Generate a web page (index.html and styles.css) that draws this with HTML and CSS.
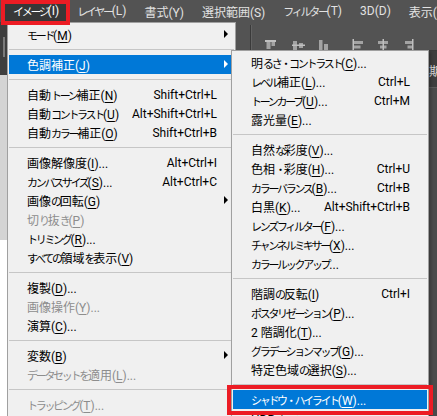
FILE: index.html
```html
<!DOCTYPE html>
<html lang="ja">
<head>
  <meta charset="UTF-8">
  <meta name="viewport" content="width=device-width, initial-scale=1.0">
  <title>イメージ - 色調補正</title>
  <link rel="stylesheet" href="styles.css">
</head>
<body>

  <!-- メニューバー -->
  <nav class="menubar">
    <span class="menubar-item is-open">イメージ(I)</span>
    <span class="menubar-item">レイヤー(L)</span>
    <span class="menubar-item">書式(Y)</span>
    <span class="menubar-item">選択範囲(S)</span>
    <span class="menubar-item">フィルター(T)</span>
    <span class="menubar-item">3D(D)</span>
    <span class="menubar-item">表示(V)</span>
  </nav>

  <div class="main">
    <!-- 左のツールパネル -->
    <div class="toolstrip">
      <div class="toolstrip-top"><span class="grip"></span></div>
      <div class="toolstrip-grey"></div>
      <div class="toolstrip-doc"></div>
    </div>

    <div class="right-area">
      <!-- オプションバー（整列ボタン） -->
      <div class="optionsbar">
        <span class="optionsbar-sep"></span>
        <svg class="align-tools" width="154" height="14" viewBox="0 0 154 14">
          <g fill="#a3a3a3">
            <rect x="3" y="3" width="11" height="2" fill="#c0c0c0"/>
            <rect x="4.5" y="5" width="4" height="7"/>
            <rect x="9.5" y="5" width="3.5" height="4"/>

            <rect x="31" y="4" width="4" height="9"/>
            <rect x="37" y="6" width="4" height="5"/>
            <rect x="30" y="7.5" width="13" height="1.5" fill="#c0c0c0"/>

            <rect x="57" y="3" width="3.5" height="10"/>
            <rect x="62" y="7" width="4" height="6"/>

            <rect x="90.5" y="2" width="1.5" height="11" fill="#c0c0c0"/>
            <rect x="92" y="4" width="9" height="3"/>
            <rect x="92" y="8.5" width="6.5" height="3"/>

            <rect x="116" y="4" width="10" height="3"/>
            <rect x="118" y="8.5" width="6.5" height="3"/>
            <rect x="120.5" y="2" width="1.5" height="11" fill="#c0c0c0"/>

            <rect x="143" y="4" width="7" height="3"/>
            <rect x="145.5" y="8.5" width="4.5" height="3"/>
            <rect x="150" y="2" width="1.5" height="11" fill="#c0c0c0"/>
          </g>
        </svg>
      </div>

      <div class="workspace">
        <div class="stage"></div>
        <div class="dock-right">
          <div class="panel-head">期化</div>
          <div class="panel-body"></div>
        </div>
      </div>
    </div>
  </div>

  <!-- イメージメニュー -->
  <ul class="menu menu-main">
    <li class="menu-item has-sub"><span class="label">モード(<u>M</u>)</span></li>
    <li class="menu-sep"></li>
    <li class="menu-item has-sub is-active"><span class="label">色調補正(<u>J</u>)</span></li>
    <li class="menu-sep"></li>
    <li class="menu-item"><span class="label">自動トーン補正(<u>N</u>)</span><span class="key">Shift+Ctrl+L</span></li>
    <li class="menu-item"><span class="label">自動コントラスト(<u>U</u>)</span><span class="key">Alt+Shift+Ctrl+L</span></li>
    <li class="menu-item"><span class="label">自動カラー補正(<u>O</u>)</span><span class="key">Shift+Ctrl+B</span></li>
    <li class="menu-sep"></li>
    <li class="menu-item"><span class="label">画像解像度(<u>I</u>)...</span><span class="key">Alt+Ctrl+I</span></li>
    <li class="menu-item"><span class="label">カンバスサイズ(<u>S</u>)...</span><span class="key">Alt+Ctrl+C</span></li>
    <li class="menu-item has-sub"><span class="label">画像の回転(<u>G</u>)</span></li>
    <li class="menu-item is-disabled"><span class="label">切り抜き(<u>P</u>)</span></li>
    <li class="menu-item"><span class="label">トリミング(<u>R</u>)...</span></li>
    <li class="menu-item"><span class="label">すべての領域を表示(<u>V</u>)</span></li>
    <li class="menu-sep"></li>
    <li class="menu-item"><span class="label">複製(<u>D</u>)...</span></li>
    <li class="menu-item is-disabled"><span class="label">画像操作(<u>Y</u>)...</span></li>
    <li class="menu-item"><span class="label">演算(<u>C</u>)...</span></li>
    <li class="menu-sep"></li>
    <li class="menu-item has-sub"><span class="label">変数(<u>B</u>)</span></li>
    <li class="menu-item is-disabled"><span class="label">データセットを適用(<u>L</u>)...</span></li>
    <li class="menu-sep"></li>
    <li class="menu-item is-disabled"><span class="label">トラッピング(<u>T</u>)...</span></li>
    <li class="menu-sep"></li>
    <li class="menu-item has-sub"><span class="label">解析(<u>A</u>)</span></li>
  </ul>

  <!-- 色調補正サブメニュー -->
  <ul class="menu menu-sub">
    <li class="menu-item"><span class="label">明るさ・コントラスト(<u>C</u>)...</span></li>
    <li class="menu-item"><span class="label">レベル補正(<u>L</u>)...</span><span class="key">Ctrl+L</span></li>
    <li class="menu-item"><span class="label">トーンカーブ(<u>U</u>)...</span><span class="key">Ctrl+M</span></li>
    <li class="menu-item"><span class="label">露光量(<u>E</u>)...</span></li>
    <li class="menu-sep"></li>
    <li class="menu-item"><span class="label">自然な彩度(<u>V</u>)...</span></li>
    <li class="menu-item"><span class="label">色相・彩度(<u>H</u>)...</span><span class="key">Ctrl+U</span></li>
    <li class="menu-item"><span class="label">カラーバランス(<u>B</u>)...</span><span class="key">Ctrl+B</span></li>
    <li class="menu-item"><span class="label">白黒(<u>K</u>)...</span><span class="key">Alt+Shift+Ctrl+B</span></li>
    <li class="menu-item"><span class="label">レンズフィルター(<u>F</u>)...</span></li>
    <li class="menu-item"><span class="label">チャンネルミキサー(<u>X</u>)...</span></li>
    <li class="menu-item"><span class="label">カラールックアップ...</span></li>
    <li class="menu-sep"></li>
    <li class="menu-item"><span class="label">階調の反転(<u>I</u>)</span><span class="key">Ctrl+I</span></li>
    <li class="menu-item"><span class="label">ポスタリゼーション(<u>P</u>)...</span></li>
    <li class="menu-item"><span class="label">2 階調化(<u>T</u>)...</span></li>
    <li class="menu-item"><span class="label">グラデーションマップ(<u>G</u>)...</span></li>
    <li class="menu-item"><span class="label">特定色域の選択(<u>S</u>)...</span></li>
    <li class="menu-sep"></li>
    <li class="menu-item is-active"><span class="label">シャドウ・ハイライト(<u>W</u>)...</span></li>
    <li class="menu-item"><span class="label">HDR トーン...</span></li>
    <li class="menu-item"><span class="label">バリエーション...</span></li>
  </ul>

  <!-- 赤枠 -->
  <div class="mark mark-menubar"></div>
  <div class="mark mark-item"></div>

  <script>
    // かな文字は UI フォントに合わせて詰めて表示する
    document.querySelectorAll('.menubar-item, .menu .label').forEach(el => {
      el.innerHTML = el.innerHTML.replace(/[\u3041-\u30ff]+/g, m => '<span class="kana">' + m + '</span>');
    });
  </script>
</body>
</html>
```

FILE: styles.css
```css
html, body {
  margin: 0;
  padding: 0;
  width: 437px;
  height: 416px;
  overflow: hidden;
  background: #535353;
  font-family: Roboto, "Noto Sans CJK JP", sans-serif;
  font-size: 12px;
}

.kana {
  font-size: 11px;
  letter-spacing: -2.3px;
}

/* メニューバー */
.menubar {
  display: flex;
  align-items: center;
  height: 22px;
  padding-left: 4px;
  background: #535353;
  color: #e2e2e2;
  white-space: nowrap;
}

.menubar-item {
  display: flex;
  align-items: center;
  height: 100%;
  padding: 0 9px;
}

.menubar-item.is-open {
  background: #383838;
  color: white;
}

/* 本体 */
.main {
  display: grid;
  grid-template-columns: 7px 1fr;
  height: 394px;
}

.toolstrip {
  display: flex;
  flex-direction: column;
}

.toolstrip-top {
  height: 53px;
  background: #3e3e3e;
  padding: 15px 0 0 3px;
  box-sizing: border-box;
}

.toolstrip-top .grip {
  display: block;
  width: 2px;
  height: 20px;
  background: #7a7a7a;
}

.toolstrip-grey {
  height: 165px;
  background: #d4d4d4;
}

.toolstrip-doc {
  flex: 1;
  background: white;
}

.right-area {
  display: flex;
  flex-direction: column;
}

.optionsbar {
  display: flex;
  align-items: flex-start;
  height: 28px;
  padding-left: 243px;
  background: #535353;
  border-bottom: 1px solid #3a3a3a;
}

.optionsbar-sep {
  width: 1px;
  height: 25px;
  margin-top: 3px;
  background: #3a3a3a;
  border-right: 1px solid #626262;
}

.align-tools {
  margin: 15px 0 0 10px;
}

.workspace {
  flex: 1;
  display: grid;
  grid-template-columns: 1fr 9px;
}

.stage {
  background: #535353;
}

.dock-right {
  display: flex;
  flex-direction: column;
  overflow: hidden;
}

.panel-head {
  height: 37px;
  padding: 11px 0 0 1px;
  box-sizing: border-box;
  background: #3e3e3e;
  color: #dcdcdc;
  white-space: nowrap;
  border-bottom: 1px solid #5c5c5c;
}

.panel-body {
  flex: 1;
  background: #4b4b4b;
}

/* ドロップダウンメニュー */
.menu {
  position: absolute;
  margin: 0;
  padding: 2px 1px;
  list-style: none;
  background: #f0f0f0;
  border: 1px solid #a0a0a0;
  box-sizing: border-box;
  color: #000;
  white-space: nowrap;
}

.menu-main {
  left: 7px;
  top: 22px;
  width: 229px;
  z-index: 1;
}

.menu-sub {
  left: 231px;
  top: 50px;
  width: 198px;
  z-index: 2;
  box-shadow: 2px 2px 3px rgba(0, 0, 0, 0.25);
}

.menu-item {
  display: flex;
  align-items: center;
  height: 19px;
  padding: 0 6px 0 18px;
}

.menu-item .label {
  flex: 1;
}

.menu-item .key {
  margin-right: 7px;
}

.menu-item u {
  text-underline-offset: 2px;
}

/* サブメニュー矢印 */
.menu-item::after {
  content: '';
  width: 0;
  height: 0;
  margin-top: -2px;
  border-left: 4px solid transparent;
  border-top: 4px solid transparent;
  border-bottom: 4px solid transparent;
}

.menu-item.has-sub::after {
  border-left-color: black;
}

.menu-item.is-active {
  background: #0078d7;
  color: white;
}

.menu-item.is-active.has-sub::after {
  border-left-color: white;
}

.menu-item.is-disabled {
  color: #8d8d8d;
}

.menu-sep {
  height: 1px;
  margin: 5px 0;
  background: #c6c6c6;
}

/* 赤枠 */
.mark {
  position: absolute;
  border: 4px solid #ec1c24;
  box-sizing: border-box;
  z-index: 3;
}

.mark-menubar {
  left: 1px;
  top: 0;
  width: 69px;
  height: 25px;
}

.mark-item {
  left: 227px;
  top: 385px;
  width: 206px;
  height: 30px;
}
```
